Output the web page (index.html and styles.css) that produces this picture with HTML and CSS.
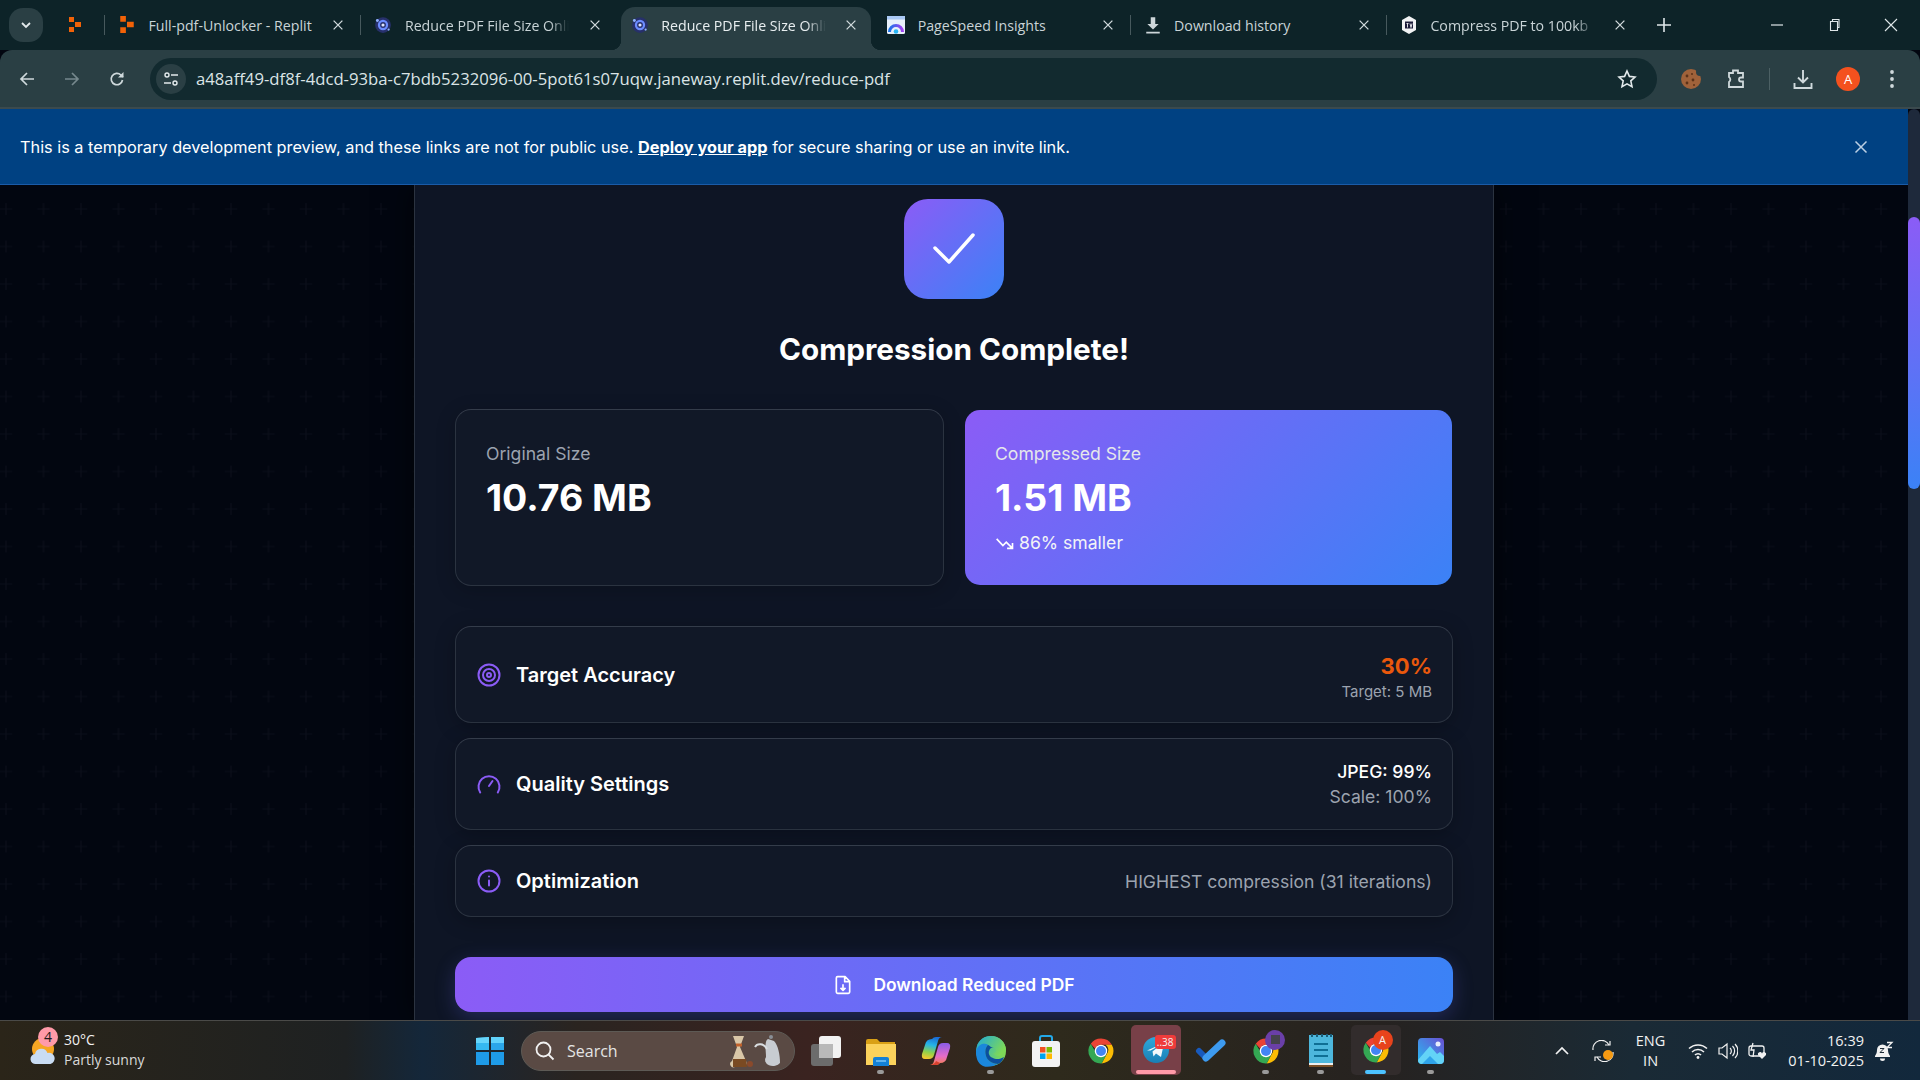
FILE: index.html
```html
<!DOCTYPE html>
<html lang="en">
  <head>
    <meta charset="UTF-8" />
    <meta name="viewport" content="width=device-width, initial-scale=1.0" />
    <title>Reduce PDF File Size Online</title>
    <link rel="stylesheet" href="styles.css">
  </head>
  <body>
    <svg class="defs" width="0" height="0">
      <defs>
        <symbol id="tab-x" viewBox="0 0 16 16"><path d="M3 3l10 10M13 3L3 13" fill="none" stroke="currentColor" stroke-width="1.5"/></symbol>
        <symbol id="replit" viewBox="0 0 16 16"><path fill="#f26207" d="M2 0h5v5H2zM8 5h6v5H8zM2 10h5v5H2z"/></symbol>
        <symbol id="atom" viewBox="0 0 16 16"><circle cx="8" cy="8" r="7" fill="#27306b"/><circle cx="8" cy="8" r="3.6" fill="none" stroke="#6c8cff" stroke-width="2"/><circle cx="8" cy="8" r="1.4" fill="#dfe6ff"/><circle cx="3" cy="4" r="1.3" fill="#8fb0ff"/><circle cx="13" cy="12" r="1" fill="#8fb0ff"/></symbol>
        <symbol id="chrome" viewBox="0 0 48 48">
          <path fill="#ea4335" d="M24 4a20 20 0 0 1 17.3 10H24a10 10 0 0 0-9.3 6.4L7.6 12.5A20 20 0 0 1 24 4z"/>
          <path fill="#fbbc04" d="M41.3 14A20 20 0 0 1 25 44l8-15a10 10 0 0 0-1.5-15z"/>
          <path fill="#34a853" d="M7.6 12.500l8.700 15A10 10 0 0 0 33 29l-8 15A20 20 0 0 1 7.600 12.500z"/>
          <circle cx="24" cy="24" r="10" fill="#fff"/><circle cx="24" cy="24" r="8" fill="#4285f4"/>
        </symbol>
      </defs>
    </svg>

    <div class="tabstrip">
      <div class="tab-search"><svg width="12" height="12" viewBox="0 0 12 12"><path d="M2 4l4 4 4-4" fill="none" stroke="#e3eaec" stroke-width="1.8"/></svg></div>
      <div class="pinned"><svg width="16" height="16"><use href="#replit"/></svg></div>
      <div class="tab">
        <svg class="favicon"><use href="#replit"/></svg>
        <span class="tab-title">Full-pdf-Unlocker - Replit</span>
        <svg class="tab-close" width="14" height="14"><use href="#tab-x"/></svg>
      </div>
      <div class="tab">
        <svg class="favicon"><use href="#atom"/></svg>
        <span class="tab-title fade">Reduce PDF File Size Onli</span>
        <svg class="tab-close" width="14" height="14"><use href="#tab-x"/></svg>
      </div>
      <div class="tab active">
        <svg class="favicon"><use href="#atom"/></svg>
        <span class="tab-title fade">Reduce PDF File Size Onli</span>
        <svg class="tab-close" width="14" height="14"><use href="#tab-x"/></svg>
      </div>
      <div class="tab no-line">
        <svg class="favicon large" viewBox="0 0 20 20"><defs><linearGradient id="gauge" x1="0" y1="0" x2="1" y2="0"><stop offset="0" stop-color="#1a73e8"/><stop offset="1" stop-color="#a142f4"/></linearGradient></defs><rect x="1" y="1" width="18" height="18" rx="1.500" fill="#e8f0fb"/><path d="M1 1h18v3.500H1z" fill="#a9c9f5"/><path d="M3.500 17a6.500 6.500 0 0 1 13 0" fill="none" stroke="url(#gauge)" stroke-width="3"/><circle cx="10" cy="16.500" r="2.300" fill="#29b6f6"/></svg>
        <span class="tab-title">PageSpeed Insights</span>
        <svg class="tab-close" width="14" height="14"><use href="#tab-x"/></svg>
      </div>
      <div class="tab">
        <svg class="favicon" viewBox="0 0 16 16"><path d="M6 1h4v6h3l-5 5-5-5h3zM2 14h12v1.500H2z" fill="#cdd6d9"/></svg>
        <span class="tab-title">Download history</span>
        <svg class="tab-close" width="14" height="14"><use href="#tab-x"/></svg>
      </div>
      <div class="tab">
        <svg class="favicon" viewBox="0 0 18 18"><path d="M9 0l7 4v10l-7 4-7-4V4z" fill="#f1f3f4"/><path d="M5 5.500h8v7H5z" fill="#1c1c3a"/><path d="M6.500 7.500h2M7.500 7.500v4M10 7.500l1 4 1-4" fill="none" stroke="#f1f3f4" stroke-width=".9"/></svg>
        <span class="tab-title fade">Compress PDF to 100kb |</span>
        <svg class="tab-close" width="14" height="14"><use href="#tab-x"/></svg>
      </div>
      <div class="new-tab"><svg width="16" height="16" viewBox="0 0 16 16"><path d="M8 1v14M1 8h14" stroke="#dfe7e9" stroke-width="1.6"/></svg></div>
      <div class="window-controls">
        <svg width="14" height="14" viewBox="0 0 14 14"><path d="M1 7h12" stroke="#dfe7e9" stroke-width="1.2"/></svg>
        <svg width="14" height="14" viewBox="0 0 14 14"><path d="M3.500 3.500h7v9h-7zM5.500 3.500V1.500h6.500v8h-1.500" fill="none" stroke="#dfe7e9" stroke-width="1.1"/></svg>
        <svg width="14" height="14" viewBox="0 0 14 14"><path d="M1 1l12 12M13 1L1 13" stroke="#dfe7e9" stroke-width="1.1"/></svg>
      </div>
    </div>

    <div class="toolbar">
      <svg class="tool back" width="18" height="18" viewBox="0 0 18 18"><path d="M16 9H3M9 3L3 9l6 6" fill="none" stroke="#cfd9dc" stroke-width="1.7"/></svg>
      <svg class="tool forward" width="18" height="18" viewBox="0 0 18 18"><path d="M2 9h13M9 3l6 6-6 6" fill="none" stroke="#76888d" stroke-width="1.7"/></svg>
      <svg class="tool reload" width="18" height="18" viewBox="0 0 18 18"><path d="M14.500 10a5.700 5.700 0 1 1-1.600-5L15 7" fill="none" stroke="#cfd9dc" stroke-width="1.7"/><path d="M15.500 2v5.500H10z" fill="#cfd9dc"/></svg>
      <div class="omnibox">
        <div class="site-info"><svg width="16" height="16" viewBox="0 0 16 16"><circle cx="4" cy="4" r="2" fill="none" stroke="#e3eaec" stroke-width="1.4"/><path d="M8 4h7M1 12h7" stroke="#e3eaec" stroke-width="1.4"/><circle cx="12" cy="12" r="2" fill="none" stroke="#e3eaec" stroke-width="1.4"/></svg></div>
        <span class="url">a48aff49-df8f-4dcd-93ba-c7bdb5232096-00-5pot61s07uqw.janeway.replit.dev/reduce-pdf</span>
        <svg class="star" width="20" height="20" viewBox="0 0 20 20"><path d="M10 2l2.400 5.400 5.600.6-4.200 3.900 1.200 5.800L10 14.800l-5 2.900 1.200-5.800L2 8l5.600-.6z" fill="none" stroke="#e3eaec" stroke-width="1.6"/></svg>
      </div>
      <div class="toolbar-actions">
        <svg width="22" height="22" viewBox="0 0 22 22"><circle cx="11" cy="11" r="10" fill="#a0623a"/><circle cx="20" cy="4" r="4" fill="#2a3f44"/><circle cx="7" cy="8" r="1.400" fill="#5b3218"/><circle cx="13" cy="12" r="1.400" fill="#5b3218"/><circle cx="7" cy="15" r="1.400" fill="#5b3218"/><circle cx="12" cy="6" r="1" fill="#5b3218"/><circle cx="14" cy="17" r="1" fill="#5b3218"/></svg>
        <svg width="22" height="22" viewBox="0 0 22 22"><path d="M4 5h4V2.500h5V5h5v4.500h-2a2 2 0 0 0 0 4h2V19H4v-5a3 3 0 0 0 0-5z" fill="none" stroke="#cfd9dc" stroke-width="1.800"/></svg>
        <i class="toolbar-line"></i>
        <svg width="22" height="22" viewBox="0 0 22 22"><path d="M11 2v12M6 9.500l5 5 5-5M2.500 15v5h17v-5" fill="none" stroke="#cfd9dc" stroke-width="1.900"/></svg>
        <div class="avatar">A</div>
        <svg class="menu-dots" width="6" height="20" viewBox="0 0 6 20"><circle cx="3" cy="3" r="1.900" fill="#cfd9dc"/><circle cx="3" cy="10" r="1.900" fill="#cfd9dc"/><circle cx="3" cy="17" r="1.900" fill="#cfd9dc"/></svg>
      </div>
    </div>

    <div class="viewport">
      <div class="page">
        <div class="banner">
          <p>This is a temporary development preview, and these links are not for public use. <a href="#deploy">Deploy your app</a> for secure sharing or use an invite link.</p>
          <svg width="14" height="14" viewBox="0 0 14 14"><path d="M1.500 1.500l11 11M12.500 1.500l-11 11" stroke="#bcd0e4" stroke-width="1.500"/></svg>
        </div>
        <main class="main">
          <svg class="plus-grid" width="100%" height="100%">
            <defs>
              <pattern id="plus" x="-12.75" y="5.250" width="37.500" height="37.500" patternUnits="userSpaceOnUse">
                <path d="M18.750 12.750v12M12.750 18.750h12" stroke="#0a0e1a" stroke-width="1.200"/>
              </pattern>
            </defs>
            <rect width="100%" height="100%" fill="url(#plus)"/>
          </svg>

          <div class="card">
            <div class="check-box">
              <svg width="52" height="52" viewBox="0 0 52 52"><path d="M7 25l14 14 24-27" fill="none" stroke="#fff" stroke-width="3.500" stroke-linecap="round" stroke-linejoin="round"/></svg>
            </div>
            <h1>Compression Complete!</h1>

            <div class="stats">
              <div class="stat">
                <div class="stat-label">Original Size</div>
                <div class="stat-value">10.76 MB</div>
              </div>
              <div class="stat highlight">
                <div class="stat-label">Compressed Size</div>
                <div class="stat-value">1.51 MB</div>
                <div class="stat-note">
                  <svg width="20" height="20" viewBox="0 0 24 24"><path d="M2 7l7.500 8 4-4L21 18.500M21 12v6.500h-6.500" fill="none" stroke="#fff" stroke-width="2"/></svg>
                  86% smaller
                </div>
              </div>
            </div>

            <div class="rows">
              <div class="row">
                <div class="row-title">
                  <svg width="24" height="24" viewBox="0 0 24 24"><g fill="none" stroke="#8b5cf6" stroke-width="2"><circle cx="12" cy="12" r="10.500"/><circle cx="12" cy="12" r="6"/><circle cx="12" cy="12" r="2"/></g></svg>
                  Target Accuracy
                </div>
                <div class="row-side">
                  <div class="accuracy">30%</div>
                  <div class="muted target">Target: 5 MB</div>
                </div>
              </div>
              <div class="row">
                <div class="row-title">
                  <svg width="24" height="24" viewBox="0 0 24 24"><path d="M3.200 20.500A10.500 10.500 0 1 1 20.800 20.500M12 14l3.500-5" fill="none" stroke="#8b5cf6" stroke-width="2" stroke-linecap="round"/></svg>
                  Quality Settings
                </div>
                <div class="row-side">
                  <div class="quality">JPEG: 99%</div>
                  <div class="muted">Scale: 100%</div>
                </div>
              </div>
              <div class="row">
                <div class="row-title">
                  <svg width="24" height="24" viewBox="0 0 24 24"><g fill="none" stroke="#8b5cf6" stroke-width="2" stroke-linecap="round"><circle cx="12" cy="12" r="10.500"/><path d="M12 16.500v-5M12 7.500h.01"/></g></svg>
                  Optimization
                </div>
                <div class="row-side">
                  <div class="muted">HIGHEST compression (31 iterations)</div>
                </div>
              </div>
            </div>

            <button class="download">
              <svg width="20" height="20" viewBox="0 0 24 24"><path d="M14.500 2H5.500a1.500 1.500 0 0 0-1.500 1.500v17A1.500 1.500 0 0 0 5.500 22h13a1.500 1.500 0 0 0 1.500-1.500V7.500zM14 2v6h6M12 11v7M9 15.500l3 3 3-3" fill="none" stroke="#fff" stroke-width="2" stroke-linejoin="round"/></svg>
              Download Reduced PDF
            </button>
          </div>
        </main>
      </div>
      <div class="scrollbar"><div class="thumb"></div></div>
    </div>

    <footer class="taskbar">
      <div class="weather">
        <div class="weather-icon">
          <svg width="30" height="30" viewBox="0 0 30 30"><circle cx="15" cy="13" r="11" fill="#f6a623"/><path d="M8 28a5 5 0 0 1-1-10 6.500 6.500 0 0 1 12.500-1 5.500 5.500 0 0 1 3 11z" fill="#c9dcf3"/></svg>
          <span class="weather-badge">4</span>
        </div>
        <div class="weather-text">
          <span>30°C</span>
          <span>Partly sunny</span>
        </div>
      </div>

      <div class="task-slot">
        <svg width="30" height="30" viewBox="0 0 30 30"><path fill="#35b9f1" d="M1 2l13-1v13H1z"/><path fill="#66d5fb" d="M1 2l13-1v6H1z"/><path fill="#2aa6ea" d="M16 1l13 0v13H16z"/><path fill="#60d2fb" d="M16 1h13v6H16z"/><path fill="#1e9be8" d="M1 16h13v13H1zM16 16h13v13H16z"/></svg>
      </div>
      <div class="search-pill">
        <svg width="22" height="22" viewBox="0 0 22 22"><circle cx="9.500" cy="9.500" r="7" fill="none" stroke="#f1f1f1" stroke-width="1.800"/><path d="M14.500 14.500l5 5" stroke="#f1f1f1" stroke-width="1.800"/></svg>
        <span>Search</span>
        <svg class="coffee" width="54" height="36" viewBox="0 0 54 36"><path d="M3 3h11L10 14l6 14a4 4 0 0 1-3 6H5a3 3 0 0 1-3-6l5-14z" fill="#d9c7a8"/><path d="M3 26h13l1 8H3z" fill="#7a4a22"/><path d="M6 12h6" stroke="#c1622c" stroke-width="3"/><circle cx="20" cy="31" r="3" fill="#8a4a2c"/><path d="M38 6c-4 2-2 12-2 18a8 6 0 0 0 14 6c0-8-2-18-6-22z" fill="#c8ccd1"/><path d="M37 16c-3-6-10-6-12-2" fill="none" stroke="#d9dde0" stroke-width="2"/><circle cx="41" cy="4" r="2" fill="#8a8f96"/></svg>
      </div>

      <div class="task-icons">
        <div class="task-slot">
          <svg width="32" height="32" viewBox="0 0 32 32"><rect x="1" y="9" width="22" height="22" rx="3" fill="#6c6c6c"/><rect x="9" y="1" width="22" height="22" rx="3" fill="#f2f2f2"/><rect x="9" y="9" width="14" height="14" fill="#b9b9b9"/></svg>
        </div>
        <div class="task-slot running">
          <svg width="32" height="32" viewBox="0 0 32 32"><path d="M1 6a2 2 0 0 1 2-2h9l3 3h15v4H1z" fill="#d9a016"/><path d="M1 9h30v21H1z" fill="#fbd25c"/><path d="M8 24a2 2 0 0 1 2-2h12a2 2 0 0 1 2 2v7H8z" fill="#1380d6"/><path d="M11 26h10" stroke="#7cc4f5" stroke-width="1.500"/></svg>
        </div>
        <div class="task-slot">
          <svg width="30" height="28" viewBox="0 0 30 28">
            <defs>
              <linearGradient id="copilot-a" x1="0.500" y1="0" x2="0.300" y2="1"><stop offset="0" stop-color="#1b6fd8"/><stop offset=".35" stop-color="#25b4e8"/><stop offset=".7" stop-color="#8fd14a"/><stop offset="1" stop-color="#f6c92f"/></linearGradient>
              <linearGradient id="copilot-b" x1="0.500" y1="0" x2="0.500" y2="1"><stop offset="0" stop-color="#8a5ce8"/><stop offset=".6" stop-color="#e56cc8"/><stop offset="1" stop-color="#f7804a"/></linearGradient>
            </defs>
            <path d="M11 2q1.500-2 4-2h6q-3 0-4 4l-4 14q-1 4-5 4H4q-4 0-3-5l3-9q1-6 7-6z" fill="url(#copilot-a)"/>
            <path d="M19 26q-1.500 2-4 2H9q3 0 4-4l4-14q1-4 5-4h4q4 0 3 5l-3 9q-1 6-7 6z" fill="url(#copilot-b)"/>
            <path d="M9 28h6q2.500 0 4-2l-4-2q-1 3-6 4z" fill="#d8402f"/>
          </svg>
        </div>
        <div class="task-slot running">
          <svg width="32" height="32" viewBox="0 0 32 32">
            <defs><linearGradient id="edge-top" x1="0" y1="0" x2="1" y2="0.500"><stop offset="0" stop-color="#1fa9d8"/><stop offset="1" stop-color="#7ed957"/></linearGradient></defs>
            <circle cx="16" cy="16" r="15" fill="url(#edge-top)"/>
            <path d="M8 31C2 28 1 22 1 16 3 9 10 7 15 8c-3 2-6 6-4 13 1 4 6 8 12 8-4 2-10 4-15 2z" fill="#1b87dc"/>
            <path d="M15 8c-3 2-6 6-4 13 1 4 6 8 12 8 3-1 5-4 6-7-3 2-8 3-11 1-3-1-5-4-4-7 1-3 3-4 5-4 3 0 5 2 5 4 3 0 5-1 6-2C28 8 21 5 15 8z" fill="#0c4f9e"/>
            <path d="M16 12c3 0 5 2 5 4 0 1-1 2-3 2 1 2 3 3 6 3 3 0 5-2 7-6 0-8-7-14-15-14C9 1 4 5 2 11c3-3 9-4 14 1z" fill="url(#edge-top)"/>
          </svg>
        </div>
        <div class="task-slot">
          <svg width="30" height="32" viewBox="0 0 30 32"><path d="M9 7V3a2 2 0 0 1 2-2h8a2 2 0 0 1 2 2v4" fill="none" stroke="#23a9e8" stroke-width="2"/><rect x="1" y="6" width="28" height="26" rx="3" fill="#f3f3f3"/><path fill="#f25022" d="M9 12h5.500v5.500H9z"/><path fill="#7fba00" d="M15.500 12H21v5.500h-5.500z"/><path fill="#00a4ef" d="M9 18.500h5.500V24H9z"/><path fill="#ffb900" d="M15.500 18.500H21V24h-5.500z"/></svg>
        </div>
        <div class="task-slot">
          <svg width="30" height="30" viewBox="0 0 48 48"><use href="#chrome"/></svg>
        </div>
        <div class="task-slot telegram-slot">
          <svg width="26" height="26" viewBox="0 0 26 26"><defs><linearGradient id="telegram" x1="0.500" y1="0" x2="0.500" y2="1"><stop offset="0" stop-color="#2fa8dc"/><stop offset="1" stop-color="#1a7fb5"/></linearGradient></defs><circle cx="13" cy="13" r="13" fill="url(#telegram)"/><path d="M4 13.500L21 6l-3 14-5-3.500-2.500 3-1-5 8-6.500-10 5.500z" fill="#f2f8fb"/></svg>
          <span class="count-badge">..38</span>
        </div>
        <div class="task-slot">
          <svg width="32" height="26" viewBox="0 0 32 26"><path d="M4 13l7 7" stroke="#185abd" stroke-width="6" stroke-linecap="round"/><path d="M11 20L27 5" stroke="#3d9bf0" stroke-width="7" stroke-linecap="round"/></svg>
        </div>
        <div class="task-slot running">
          <svg width="30" height="30" viewBox="0 0 48 48"><use href="#chrome"/></svg>
          <span class="chrome-profile purple"><i></i></span>
        </div>
        <div class="task-slot running">
          <svg width="26" height="34" viewBox="0 0 26 34"><rect x="1" y="1" width="24" height="32" fill="#4db7dc"/><path d="M1 29h24v4H1z" fill="#7a4f26"/><path d="M1 29h24v2H1z" fill="#eee"/><path d="M6 10h14M6 16h14M6 22h14" stroke="#0f6f94" stroke-width="2"/><path d="M4 0v3M9 0v3M14 0v3M19 0v3M23 0v3" stroke="#1a5d78" stroke-width="2"/></svg>
        </div>
        <div class="task-slot chrome-active">
          <svg width="30" height="30" viewBox="0 0 48 48"><use href="#chrome"/></svg>
          <span class="chrome-profile orange">A</span>
        </div>
        <div class="task-slot running">
          <svg width="26" height="26" viewBox="0 0 26 26"><defs><linearGradient id="photos" x1="0" y1="1" x2="1" y2="0"><stop offset="0" stop-color="#26bdf2"/><stop offset="1" stop-color="#6a4fd3"/></linearGradient></defs><rect width="26" height="26" rx="4" fill="url(#photos)"/><path d="M0 22L12 8l7 8 3-2 4 4v4a4 4 0 0 1-4 4H4a4 4 0 0 1-4-4z" fill="#63d3f7"/><path d="M4 26l8-8 8 8z" fill="#2fa4ea"/><circle cx="20" cy="6" r="2.500" fill="#e8eefc"/></svg>
        </div>
      </div>

      <div class="tray">
        <svg class="tray-chevron" width="14" height="9" viewBox="0 0 14 9"><path d="M1 8l6-6 6 6" fill="none" stroke="#f2f2f2" stroke-width="1.700"/></svg>
        <svg class="tray-sync" width="22" height="22" viewBox="0 0 22 22"><path d="M1 10A8.500 8.500 0 0 1 17 5M21 12a8.500 8.500 0 0 1-16 5" fill="none" stroke="#f2f2f2" stroke-width="1.200"/><path d="M13 5h5V1M9 17H3v4" fill="none" stroke="#f2f2f2" stroke-width="1.200"/><circle cx="16" cy="15" r="5" fill="#f59a13"/></svg>
        <div class="lang"><span>ENG</span><span>IN</span></div>
        <svg width="20" height="16" viewBox="0 0 20 16"><g fill="none" stroke="#f2f2f2" stroke-width="1.500"><path d="M1 5.500a13 13 0 0 1 18 0"/><path d="M4 9a8.500 8.500 0 0 1 12 0"/><path d="M7 12a4 4 0 0 1 6 0"/></g><circle cx="10" cy="14.500" r="1.400" fill="#f2f2f2"/></svg>
        <svg width="20" height="18" viewBox="0 0 20 18"><g fill="none" stroke="#f2f2f2" stroke-width="1.200"><path d="M1 6h3l5-4v14l-5-4H1z"/><path d="M12 6a4 4 0 0 1 0 6M14.500 4a7 7 0 0 1 0 10M17 2a10 10 0 0 1 0 14"/></g></svg>
        <svg width="20" height="18" viewBox="0 0 20 18"><rect x="1" y="4" width="15" height="10" rx="2" fill="none" stroke="#f2f2f2" stroke-width="1.300"/><path d="M5 1L3 8h3l-1 7" fill="none" stroke="#f2f2f2" stroke-width="1.300"/><path d="M10 13a2 2 0 0 1 4-1.500A2 2 0 0 1 18 13l-4 4z" fill="#f2f2f2"/></svg>
        <div class="clock"><span>16:39</span><span>01-10-2025</span></div>
        <svg width="20" height="20" viewBox="0 0 20 20"><path d="M1 15c1-1.500 2-3 2-6a5.500 5.500 0 0 1 11 0c0 3 1 4.500 2 6v1H1z" fill="#f2f2f2"/><path d="M6 17.500h5a2.500 2.500 0 0 1-5 0z" fill="#f2f2f2"/><path d="M6 7.500h4l-4 4h4M13 1.500h5l-5 5h5" fill="none" stroke="#1c2a36" stroke-width="1"/><path d="M13 1.500h5l-5 5h5" fill="none" stroke="#f2f2f2" stroke-width="1.300"/></svg>
      </div>
    </footer>
  </body>
</html>
```

FILE: styles.css
```css
* {
  box-sizing: border-box;
}

body {
  margin: 0;
  width: 1920px;
  height: 1080px;
  overflow: hidden;
  display: flex;
  flex-direction: column;
  font-family: "Inter", sans-serif;
  background: #020610;
  color: #fff;
}

.defs {
  position: absolute;
}

/* Browser tab strip */
.tabstrip {
  height: 50px;
  flex: none;
  display: flex;
  align-items: flex-end;
  padding-left: 9px;
  background: #0d2328;
  font-family: "Open Sans", sans-serif;
  font-size: 14.2px;
  color: #c9d4d7;
}

.tab-search {
  width: 34px;
  height: 34px;
  margin-bottom: 8px;
  border-radius: 14px;
  background: #2a3f44;
  display: flex;
  align-items: center;
  justify-content: center;
}

.pinned {
  width: 61px;
  height: 34px;
  margin-bottom: 8px;
  padding-left: 24px;
  display: flex;
  align-items: center;
}

.tab {
  width: 256.4px;
  height: 43px;
  flex: none;
  position: relative;
  display: flex;
  align-items: center;
  padding: 0 15px 7px 14px;
  gap: 12.5px;
}

.tab::before {
  content: "";
  position: absolute;
  left: 0;
  top: 8px;
  height: 20px;
  border-left: 1px solid #47595d;
}

.tab.active {
  width: 250px;
  margin: 0 2.2px 0 4.2px;
  padding: 0 12.8px 7px 9.8px;
  border-radius: 14px 14px 0 0;
  background: #2a3f44;
  color: #e8eef0;
}

.tab.active::before,
.tab.active::after {
  content: "";
  position: absolute;
  top: auto;
  bottom: 0;
  width: 10px;
  height: 10px;
  border: 0;
}

.tab.active::before {
  left: -10px;
  background: radial-gradient(circle at 0 0, transparent 10px, #2a3f44 10.5px);
}

.tab.active::after {
  right: -10px;
  background: radial-gradient(circle at 100% 0, transparent 10px, #2a3f44 10.5px);
}

.tab.no-line::before {
  display: none;
}

.favicon {
  width: 18px;
  height: 18px;
  flex: none;
}

.favicon.large {
  width: 20px;
  height: 20px;
  margin: 0 -1px;
}

.tab-title {
  flex: 1;
  min-width: 0;
  white-space: nowrap;
}

.tab-title.fade {
  mask-image: linear-gradient(to right, #000 88%, transparent 100%);
}

.tab-close {
  flex: none;
  margin-left: 6px;
  color: #d3dcde;
}

.new-tab {
  height: 43px;
  padding: 0 0 7px 14px;
  display: flex;
  align-items: center;
}

.window-controls {
  margin-left: auto;
  height: 50px;
  display: flex;
  align-items: center;
  gap: 43px;
  padding-right: 22px;
}

/* Browser toolbar */
.toolbar {
  height: 59px;
  flex: none;
  display: flex;
  align-items: center;
  padding-left: 18px;
  background: #2a3f44;
  border-bottom: 2px solid #3b4a4e;
  border-radius: 12px 12px 0 0;
}

.tool {
  flex: none;
}

.forward,
.reload {
  margin-left: 27px;
}

.omnibox {
  width: 1507px;
  height: 42px;
  margin-left: 24px;
  border-radius: 21px;
  background: #122a2f;
  display: flex;
  align-items: center;
  padding: 0 20px 0 6px;
}

.site-info {
  width: 30px;
  height: 30px;
  border-radius: 50%;
  background: #2a3f44;
  display: flex;
  align-items: center;
  justify-content: center;
}

.url {
  margin-left: 10px;
  font-family: "Open Sans", sans-serif;
  font-size: 16.7px;
  color: #dbe4e6;
  white-space: nowrap;
}

.star {
  margin-left: auto;
}

.toolbar-actions {
  display: flex;
  align-items: center;
  margin-left: 23.4px;
  gap: 23px;
}

.toolbar-line {
  width: 1px;
  height: 22px;
  margin: 0 -1.4px 0 -1px;
  background: #4c6064;
}

.avatar {
  width: 24px;
  height: 24px;
  margin-left: -0.8px;
  margin-right: -1px;
  border-radius: 50%;
  background: #f4511e;
  font-family: "Open Sans", sans-serif;
  font-size: 13px;
  line-height: 24px;
  text-align: center;
  color: #fff;
}

.menu-dots {
  margin-left: 7px;
}

/* Page area under the browser chrome */
.viewport {
  flex: 1;
  min-height: 0;
  display: flex;
}

.page {
  flex: 1;
  min-width: 0;
  display: flex;
  flex-direction: column;
}

.banner {
  height: 76px;
  flex: none;
  display: flex;
  align-items: center;
  justify-content: space-between;
  padding: 0 40px 0 20px;
  background: #004182;
  border-bottom: 1px solid #1a5ba8;
}

.banner p {
  margin: 0;
  font-size: 16.3px;
  color: #fff;
}

.banner a {
  color: #fff;
  font-weight: 700;
}

.main {
  flex: 1;
  min-height: 0;
  position: relative;
  overflow: hidden;
  display: flex;
  justify-content: center;
  background: #020610;
}

.plus-grid {
  position: absolute;
  top: 0;
  left: 0;
}

.card {
  position: relative;
  width: 1080px;
  height: 100%;
  padding: 14px 40px 0;
  background: #0e1525;
  border-left: 1px solid #2b3340;
  border-right: 1px solid #2b3340;
  box-shadow: 0 0 30px rgba(0, 0, 0, 0.6);
  display: flex;
  flex-direction: column;
}

.check-box {
  width: 100px;
  height: 100px;
  flex: none;
  align-self: center;
  border-radius: 24px;
  background: linear-gradient(135deg, #8b5cf6, #3b82f6);
  display: flex;
  align-items: center;
  justify-content: center;
}

h1 {
  margin: 30px 0 40px;
  font-size: 29.7px;
  line-height: 40px;
  font-weight: 700;
  text-align: center;
}

.stats {
  display: grid;
  grid-template-columns: 1fr 1fr;
  gap: 20px;
}

.stat {
  padding: 30px;
  border: 1px solid #2b3340;
  border-top-color: #343c4a;
  border-radius: 16px;
  background: #111827;
  box-shadow: 0 4px 20px rgba(0, 0, 0, 0.2);
}

.stat.highlight {
  border-color: transparent;
  background: linear-gradient(135deg, #8b5cf6, #3b82f6) padding-box;
  box-shadow: none;
}

.stat-label {
  font-size: 17.6px;
  line-height: 27px;
  color: #9ca3af;
}

.highlight .stat-label {
  color: #e5e7eb;
}

.stat-value {
  margin-top: 9px;
  font-size: 37.4px;
  line-height: 44px;
  font-weight: 700;
}

.stat-note {
  margin-top: 10px;
  display: flex;
  align-items: center;
  gap: 4px;
  font-size: 17.6px;
  line-height: 25px;
  color: #f3f4f6;
}

.rows {
  margin-top: 40px;
  display: flex;
  flex-direction: column;
  gap: 15px;
}

.row {
  display: flex;
  align-items: center;
  justify-content: space-between;
  padding: 20px 20px 20px 21px;
  border: 1px solid #2b3340;
  border-top-color: #343c4a;
  border-radius: 16px;
  background: #111827;
  box-shadow: 0 4px 20px rgba(0, 0, 0, 0.25);
}

.row-title {
  display: flex;
  align-items: center;
  gap: 15px;
  font-size: 20px;
  line-height: 30px;
  font-weight: 600;
}

.row-side {
  text-align: right;
  font-size: 17.6px;
  line-height: 25px;
}

.muted {
  color: #9ca3af;
}

.accuracy {
  padding-top: 4px;
  font-size: 22px;
  line-height: 30px;
  font-weight: 700;
  color: #ea580c;
}

.target {
  font-size: 15px;
  line-height: 21px;
}

.quality {
  font-weight: 500;
  color: #fff;
}

.download {
  height: 55px;
  flex: none;
  margin-top: 40px;
  border: 0;
  border-radius: 16px;
  background: linear-gradient(90deg, #8b5cf6, #3b82f6);
  box-shadow: 0 6px 20px rgba(99, 102, 241, 0.25);
  font-family: inherit;
  font-size: 17.4px;
  font-weight: 600;
  color: #fff;
  display: flex;
  align-items: center;
  justify-content: center;
  gap: 20px;
}

.scrollbar {
  width: 12px;
  flex: none;
  border-radius: 6px 6px 0 0;
  background: #1e293b;
  padding-top: 108px;
}

.thumb {
  height: 272px;
  border-radius: 6px;
  background: linear-gradient(180deg, #8b5cf6, #3b82f6);
}

/* Windows taskbar */
.taskbar {
  height: 60px;
  flex: none;
  display: flex;
  align-items: center;
  border-top: 1px solid #4a4a48;
  background: linear-gradient(90deg, #2b2519 0%, #1e2122 18%, #14273a 22%, #2a2420 30%, #3a2320 42%, #2e2a1c 55%, #262220 72%, #1a2a35 85%, #12283c 100%);
  font-family: "Open Sans", sans-serif;
  color: #f2f2f2;
}

.weather {
  width: 462px;
  flex: none;
  display: flex;
  align-items: center;
  padding-left: 28px;
}

.weather-icon {
  position: relative;
  width: 30px;
  height: 30px;
}

.weather-badge {
  position: absolute;
  top: -9px;
  left: 10px;
  width: 20px;
  height: 20px;
  border-radius: 50%;
  background: #ff9aa8;
  color: #1c1c1c;
  font-size: 14px;
  line-height: 20px;
  text-align: center;
}

.weather-text {
  margin: -2px 0 0 6px;
  display: flex;
  flex-direction: column;
  font-size: 14px;
  line-height: 20px;
}

.weather-text span + span {
  color: #d9d9d9;
}

.task-slot {
  position: relative;
  width: 55px;
  height: 52px;
  flex: none;
  display: flex;
  align-items: center;
  justify-content: center;
}

.task-slot.running::after {
  content: "";
  position: absolute;
  left: 24px;
  bottom: 3px;
  width: 7px;
  height: 4px;
  border-radius: 2px;
  background: #9a9a9a;
}

.telegram-slot,
.chrome-active {
  width: 50px;
  height: 50px;
  margin: 0 2.5px;
  border-radius: 5px;
}

.telegram-slot {
  background: #784048;
}

.telegram-slot::after {
  content: "";
  position: absolute;
  left: 5px;
  right: 5px;
  bottom: 1px;
  height: 4px;
  border-radius: 2px;
  background: #ff9aa8;
}

.count-badge {
  position: absolute;
  top: 10px;
  right: 5px;
  padding: 0 2px;
  border-radius: 3px;
  background: #ef3b3b;
  font-size: 10px;
  line-height: 14px;
}

.chrome-active {
  background: #322c2c;
}

.chrome-active::after {
  content: "";
  position: absolute;
  left: 14px;
  right: 15px;
  bottom: 1px;
  height: 4px;
  border-radius: 2px;
  background: #4cc2ff;
}

.chrome-profile {
  position: absolute;
  top: 5px;
  right: 8px;
  width: 20px;
  height: 20px;
  border-radius: 50%;
  font-size: 11px;
  line-height: 20px;
  text-align: center;
  display: flex;
  align-items: center;
  justify-content: center;
}

.chrome-profile.orange {
  background: #e8431c;
}

.chrome-profile.purple {
  background: #6a3fa8;
}

.chrome-profile i {
  width: 9px;
  height: 9px;
  background: #45434d;
}

.search-pill {
  width: 274px;
  height: 40px;
  flex: none;
  margin-left: 4px;
  margin-right: 3px;
  padding: 0 10px 0 12px;
  border-radius: 20px;
  border: 1px solid #5d5a55;
  background: #5a4a44;
  display: flex;
  align-items: center;
  gap: 11px;
  font-size: 16px;
  color: #e5e5e5;
}

.coffee {
  margin-left: auto;
}

.task-icons {
  display: flex;
  flex: none;
}

.tray {
  margin-left: auto;
  display: flex;
  align-items: center;
  padding-right: 26px;
  gap: 10px;
}

.lang {
  display: flex;
  flex-direction: column;
  align-items: center;
  margin: 0 13px 0 4px;
  font-size: 14.5px;
  line-height: 20px;
}

.clock {
  display: flex;
  flex-direction: column;
  align-items: flex-end;
  margin-left: 10px;
  font-size: 14.5px;
  line-height: 20px;
}

.tray-chevron {
  margin-right: 13px;
}

.tray-sync {
  margin-right: 8px;
}
```
